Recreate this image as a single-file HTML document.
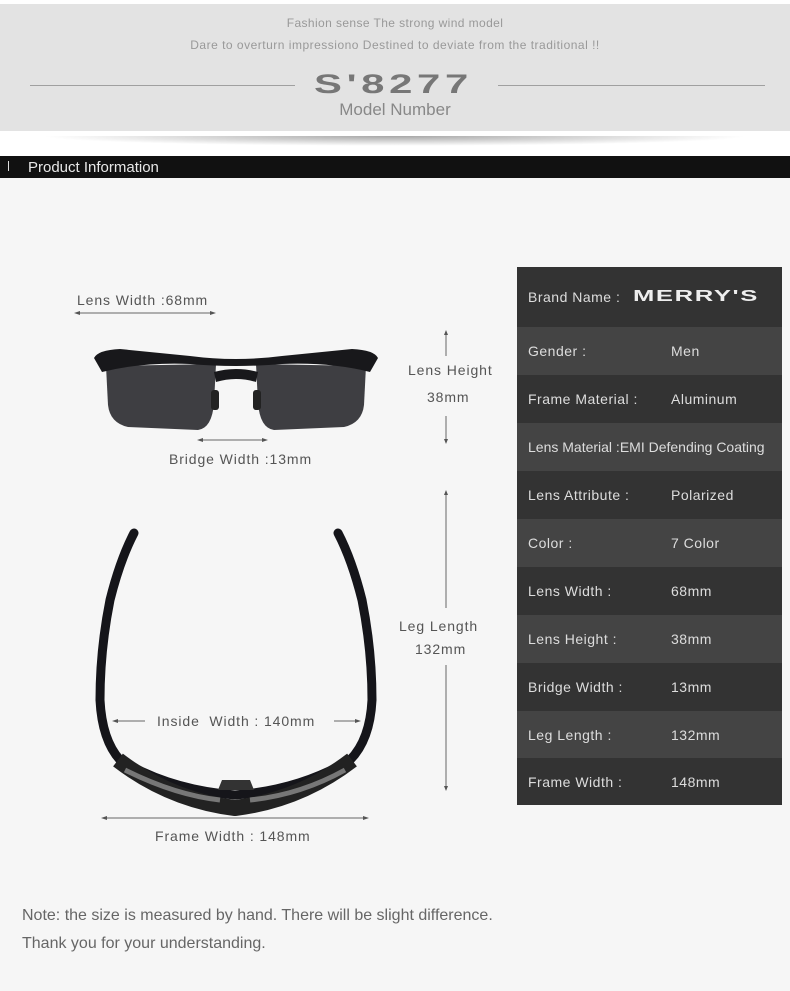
<!DOCTYPE html>
<html><head><meta charset="utf-8"><style>
*{margin:0;padding:0;box-sizing:border-box}
body{width:790px;height:991px;background:#f6f6f6;font-family:"Liberation Sans",sans-serif;position:relative;overflow:hidden;color:#555}
.a{position:absolute;white-space:nowrap}
.l{font-size:14px;letter-spacing:.9px}
#top{position:absolute;left:0;top:0;width:790px;height:131px;background:#e3e3e3;border-top:4px solid #fff}
.row{position:absolute;left:517px;width:265px;color:#ddd;font-size:14px;letter-spacing:.5px}
.row span{position:absolute;top:50%;transform:translateY(-50%)}
</style></head><body>
<div style="position:absolute;left:0;top:131px;width:790px;height:25px;background:#fff"></div>
<div id="top"></div>
<div class="a" style="left:0;width:790px;text-align:center;top:16px;font-size:12px;color:#999;letter-spacing:.4px">Fashion sense The strong wind model</div>
<div class="a" style="left:0;width:790px;text-align:center;top:38px;font-size:12px;color:#999;letter-spacing:.5px">Dare to overturn impressiono Destined to deviate from the traditional !!</div>
<div class="a" style="left:30px;top:85px;width:265px;height:1px;background:#a0a0a0"></div>
<div class="a" style="left:498px;top:85px;width:267px;height:1px;background:#a0a0a0"></div>
<div class="a" style="left:314px;top:70px;font-size:27px;line-height:28px;font-weight:bold;color:#777;letter-spacing:3px;transform:scaleX(1.55);transform-origin:left">S'8277</div>
<div class="a" style="left:0;width:790px;text-align:center;top:100px;font-size:17px;color:#888">Model Number</div>
<div class="a" style="left:40px;top:136px;width:710px;height:10px;background:radial-gradient(ellipse at center top,rgba(0,0,0,.35),rgba(0,0,0,0) 70%)"></div>
<div class="a" style="left:0;top:156px;width:790px;height:22px;background:#111"></div>
<div class="a" style="left:8px;top:161px;width:1px;height:10px;background:#ddd"></div>
<div class="a" style="left:28px;top:159px;font-size:15px;color:#e8e8e8">Product Information</div>

<svg class="a" style="left:0;top:180px" width="510" height="680" viewBox="0 180 510 680">
<g fill="#666" stroke="#666">
<line x1="77" y1="313" x2="213" y2="313"/><line x1="200" y1="440" x2="265" y2="440"/>
<line x1="446" y1="332" x2="446" y2="356"/><line x1="446" y1="416" x2="446" y2="441"/>
<line x1="446" y1="492" x2="446" y2="608"/><line x1="446" y1="665" x2="446" y2="788"/>
<line x1="115" y1="721" x2="145" y2="721"/><line x1="334" y1="721" x2="358" y2="721"/>
<line x1="104" y1="818" x2="366" y2="818"/>
</g>
<g fill="#555">
<polygon points="74,313 80,311 80,315"/><polygon points="216,313 210,311 210,315"/>
<polygon points="197,440 203,438 203,442"/><polygon points="268,440 262,438 262,442"/>
<polygon points="446,330 444,335 448,335"/><polygon points="446,444 444,439 448,439"/>
<polygon points="446,490 444,495 448,495"/><polygon points="446,791 444,786 448,786"/>
<polygon points="112,721 118,719 118,723"/><polygon points="361,721 355,719 355,723"/>
<polygon points="101,818 107,816 107,820"/><polygon points="369,818 363,816 363,820"/>
</g>
<path d="M106,366 L216,364 L214,403 Q212,428 198,430 L128,427 Q110,423 108,405 Z" fill="#3e3e42"/>
<path d="M256,364 L366,366 L364,405 Q362,423 344,427 L274,430 Q260,428 258,403 Z" fill="#3e3e42"/>
<path d="M94,358 Q98,350 120,349 L190,356 Q236,362 282,356 L352,349 Q374,350 378,358 L370,372 Q330,362 282,364 Q236,368 190,364 Q142,362 102,372 Z" fill="#18181b"/>
<path d="M214,372 Q236,366 258,372 L256,382 Q236,376 216,382 Z" fill="#18181b"/>
<rect x="211" y="390" width="8" height="20" rx="3" fill="#222"/><rect x="253" y="390" width="8" height="20" rx="3" fill="#222"/>
<path d="M134,533 Q120,560 110,600 Q100,650 100,700 Q102,740 120,760 Q170,790 235,795 Q300,790 350,760 Q370,740 372,700 Q372,650 362,600 Q352,560 338,533" stroke="#15151a" stroke-width="9" fill="none" stroke-linecap="round"/>
<path d="M118,760 Q170,800 235,808 Q300,800 352,760" stroke="#222" stroke-width="16" fill="none"/>
<path d="M125,770 Q175,795 220,800" stroke="#777" stroke-width="5" fill="none"/>
<path d="M250,800 Q300,795 345,770" stroke="#777" stroke-width="5" fill="none"/>
<path d="M218,790 L222,780 L250,780 L254,790 Z" fill="#333"/>
</svg>
<div class="a l" style="left:77px;top:292px">Lens Width :68mm</div>
<div class="a l" style="left:169px;top:451px">Bridge Width :13mm</div>
<div class="a l" style="left:408px;top:362px">Lens Height</div>
<div class="a l" style="left:427px;top:389px">38mm</div>
<div class="a l" style="left:399px;top:618px">Leg Length</div>
<div class="a l" style="left:415px;top:641px">132mm</div>
<div class="a l" style="left:157px;top:713px">Inside &nbsp;Width : 140mm</div>
<div class="a l" style="left:155px;top:828px">Frame Width : 148mm</div>

<div class="row" style="top:267px;height:60px;background:#333"><span style="left:11px">Brand Name :</span><span style="left:116px;font-weight:bold;font-size:16px;color:#eee;letter-spacing:1px;transform:translateY(-50%) scaleX(1.6);transform-origin:left">MERRY'S</span></div>
<div class="row" style="top:327px;height:48px;background:#444"><span style="left:11px">Gender :</span><span style="left:154px">Men</span></div>
<div class="row" style="top:375px;height:48px;background:#333"><span style="left:11px">Frame Material :</span><span style="left:154px">Aluminum</span></div>
<div class="row" style="top:423px;height:48px;background:#444;letter-spacing:0"><span style="left:11px">Lens Material :EMI Defending Coating</span></div>
<div class="row" style="top:471px;height:48px;background:#333"><span style="left:11px">Lens Attribute :</span><span style="left:154px">Polarized</span></div>
<div class="row" style="top:519px;height:48px;background:#444"><span style="left:11px">Color :</span><span style="left:154px">7 Color</span></div>
<div class="row" style="top:567px;height:48px;background:#333"><span style="left:11px">Lens Width :</span><span style="left:154px">68mm</span></div>
<div class="row" style="top:615px;height:48px;background:#444"><span style="left:11px">Lens Height :</span><span style="left:154px">38mm</span></div>
<div class="row" style="top:663px;height:48px;background:#333"><span style="left:11px">Bridge Width :</span><span style="left:154px">13mm</span></div>
<div class="row" style="top:711px;height:47px;background:#444"><span style="left:11px">Leg Length :</span><span style="left:154px">132mm</span></div>
<div class="row" style="top:758px;height:47px;background:#333"><span style="left:11px">Frame Width :</span><span style="left:154px">148mm</span></div>

<div class="a" style="left:22px;top:907px;font-size:16px;color:#666">Note: the size is measured by hand. There will be slight difference.</div>
<div class="a" style="left:22px;top:935px;font-size:16px;color:#666">Thank you for your understanding.</div>
</body></html>
